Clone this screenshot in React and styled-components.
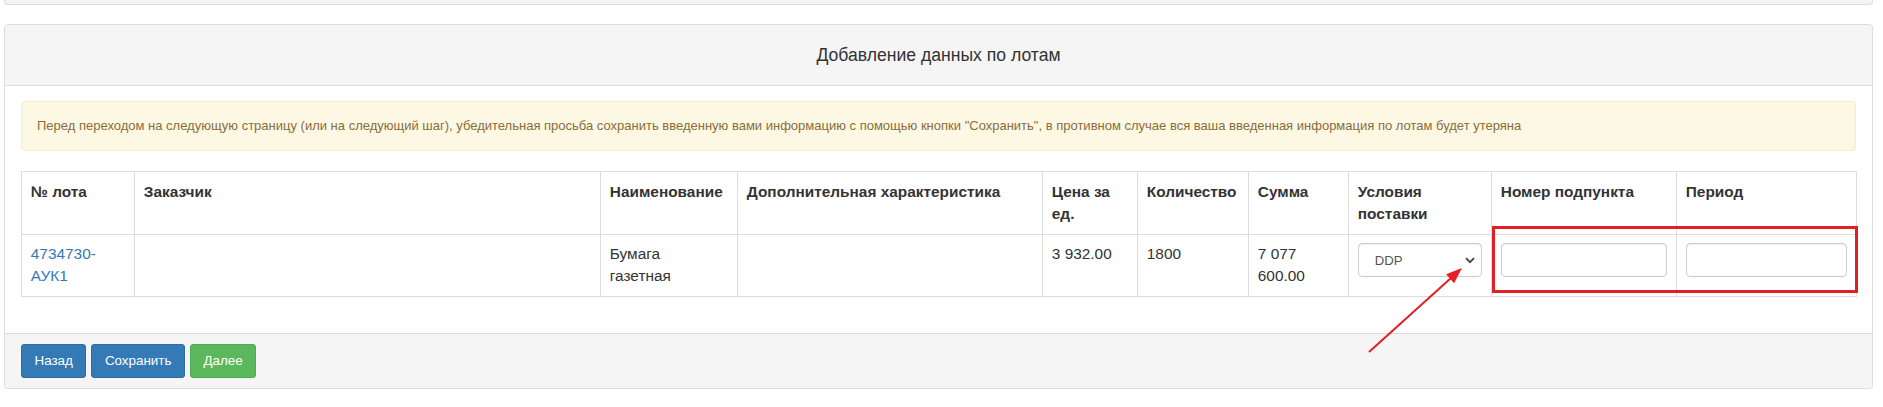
import React from 'react';
import styled, { createGlobalStyle } from 'styled-components';

const GlobalStyle = createGlobalStyle`
    * {
        box-sizing: border-box;
    }
    body {
        margin: 0;
        background: #fff;
        color: #333;
        font-family: "Liberation Sans", Arial, sans-serif;
    }
`;

const Page = styled.div`
    position: relative;
    padding: 0 10px 0 4px;
`;

const PrevPanelStub = styled.div`
    height: 5px;
    margin-bottom: 19px;
    background: #f5f5f5;
    border: 1px solid #ddd;
    border-top: none;
    border-radius: 0 0 4px 4px;
`;

const Panel = styled.div`
    background: #fff;
    border: 1px solid #ddd;
    border-radius: 4px;
    box-shadow: 0 1px 1px rgba(0, 0, 0, 0.05);
`;

const PanelHeading = styled.div`
    padding: 20px 16px;
    background: #f5f5f5;
    border-bottom: 1px solid #ddd;
    border-radius: 3px 3px 0 0;
    text-align: center;
    font-size: 17.6px;
    line-height: 20px;
    color: #333;
`;

const PanelBody = styled.div`
    padding: 15px 16px 16px;
`;

const Alert = styled.div`
    padding: 16px 15px;
    margin-bottom: 20px;
    background: #fcf8e3;
    border: 1px solid #faebcc;
    border-radius: 4px;
    color: #8a6d3b;
    font-size: 13px;
    line-height: 16px;
`;

const Table = styled.table`
    width: 100%;
    table-layout: fixed;
    border-collapse: collapse;
    border: 1px solid #ddd;
    margin-bottom: 20px;
    font-size: 15.4px;
    line-height: 22px;
`;

const Th = styled.th`
    padding: 8.8px;
    border: 1px solid #ddd;
    text-align: left;
    vertical-align: top;
    font-weight: bold;
    white-space: ${props => (props.wrap ? 'normal' : 'nowrap')};
`;

const Td = styled.td`
    padding: 8.8px;
    border: 1px solid #ddd;
    vertical-align: top;
`;

const LotLink = styled.a`
    color: #337ab7;
    text-decoration: none;
`;

const SelectWrap = styled.div`
    position: relative;
`;

const Select = styled.select`
    appearance: none;
    display: block;
    width: 100%;
    height: 34px;
    padding: 0 16px;
    background: #fff;
    border: 1px solid #ccc;
    border-radius: 4px;
    box-shadow: inset 0 1px 1px rgba(0, 0, 0, 0.075);
    font-family: inherit;
    font-size: 13.2px;
    color: #555;
`;

const Chevron = styled.svg`
    position: absolute;
    right: 7px;
    top: 14px;
    pointer-events: none;
`;

const Input = styled.input`
    display: block;
    width: 100%;
    height: 34px;
    padding: 6px 12px;
    background: #fff;
    border: 1px solid #ccc;
    border-radius: 4px;
    box-shadow: inset 0 1px 1px rgba(0, 0, 0, 0.075);
    font-family: inherit;
    font-size: 13.2px;
`;

const PanelFooter = styled.div`
    display: flex;
    gap: 5px;
    padding: 10px 16px;
    background: #f5f5f5;
    border-top: 1px solid #ddd;
    border-radius: 0 0 3px 3px;
`;

const Button = styled.button`
    padding: 6px 12.5px;
    border: 1px solid ${props => (props.variant === 'success' ? '#4cae4c' : '#2e6da4')};
    background: ${props => (props.variant === 'success' ? '#5cb85c' : '#337ab7')};
    border-radius: 3px;
    color: #fff;
    font-family: inherit;
    font-size: 13.4px;
    line-height: 19.8px;
    cursor: pointer;
`;

const Highlight = styled.div`
    position: absolute;
    left: 1492px;
    top: 226px;
    width: 366px;
    height: 67px;
    border: 3px solid #e31e24;
    pointer-events: none;
`;

const Arrow = styled.svg`
    position: absolute;
    left: 1360px;
    top: 260px;
    pointer-events: none;
`;

const columns = [113, 466, 137, 305, 95, 111, 100, 143, 185, 180];

const App = () => (
    <Page>
        <GlobalStyle />
        <PrevPanelStub />
        <Panel>
            <PanelHeading>Добавление данных по лотам</PanelHeading>
            <PanelBody>
                <Alert>
                    Перед переходом на следующую страницу (или на следующий шаг), убедительная просьба сохранить
                    введенную вами информацию с помощью кнопки "Сохранить", в противном случае вся ваша введенная
                    информация по лотам будет утеряна
                </Alert>
                <Table>
                    <colgroup>
                        {columns.map((w, i) => (
                            <col key={i} style={{ width: w }} />
                        ))}
                    </colgroup>
                    <thead>
                        <tr>
                            <Th>№ лота</Th>
                            <Th>Заказчик</Th>
                            <Th>Наименование</Th>
                            <Th>Дополнительная характеристика</Th>
                            <Th wrap>Цена за ед.</Th>
                            <Th>Количество</Th>
                            <Th>Сумма</Th>
                            <Th wrap>Условия поставки</Th>
                            <Th>Номер подпункта</Th>
                            <Th>Период</Th>
                        </tr>
                    </thead>
                    <tbody>
                        <tr>
                            <Td>
                                <LotLink href="#">4734730-АУК1</LotLink>
                            </Td>
                            <Td></Td>
                            <Td>
                                Бумага
                                <br />
                                газетная
                            </Td>
                            <Td></Td>
                            <Td>3 932.00</Td>
                            <Td>1800</Td>
                            <Td>
                                7 077
                                <br />
                                600.00
                            </Td>
                            <Td>
                                <SelectWrap>
                                    <Select defaultValue="DDP">
                                        <option value="DDP">DDP</option>
                                    </Select>
                                    <Chevron width="10" height="7" viewBox="0 0 10 7">
                                        <path d="M1 1.2 L5 5.2 L9 1.2" fill="none" stroke="#444" strokeWidth="1.8" />
                                    </Chevron>
                                </SelectWrap>
                            </Td>
                            <Td>
                                <Input type="text" />
                            </Td>
                            <Td>
                                <Input type="text" />
                            </Td>
                        </tr>
                    </tbody>
                </Table>
            </PanelBody>
            <PanelFooter>
                <Button>Назад</Button>
                <Button>Сохранить</Button>
                <Button variant="success">Далее</Button>
            </PanelFooter>
        </Panel>
        <Highlight />
        <Arrow width="110" height="100" viewBox="0 0 110 100">
            <line x1="9" y1="92" x2="91" y2="18" stroke="#e31e24" strokeWidth="2" />
            <polygon points="102,8 94.1,23.2 86.1,14.2" fill="#e31e24" />
        </Arrow>
    </Page>
);

export default App;
